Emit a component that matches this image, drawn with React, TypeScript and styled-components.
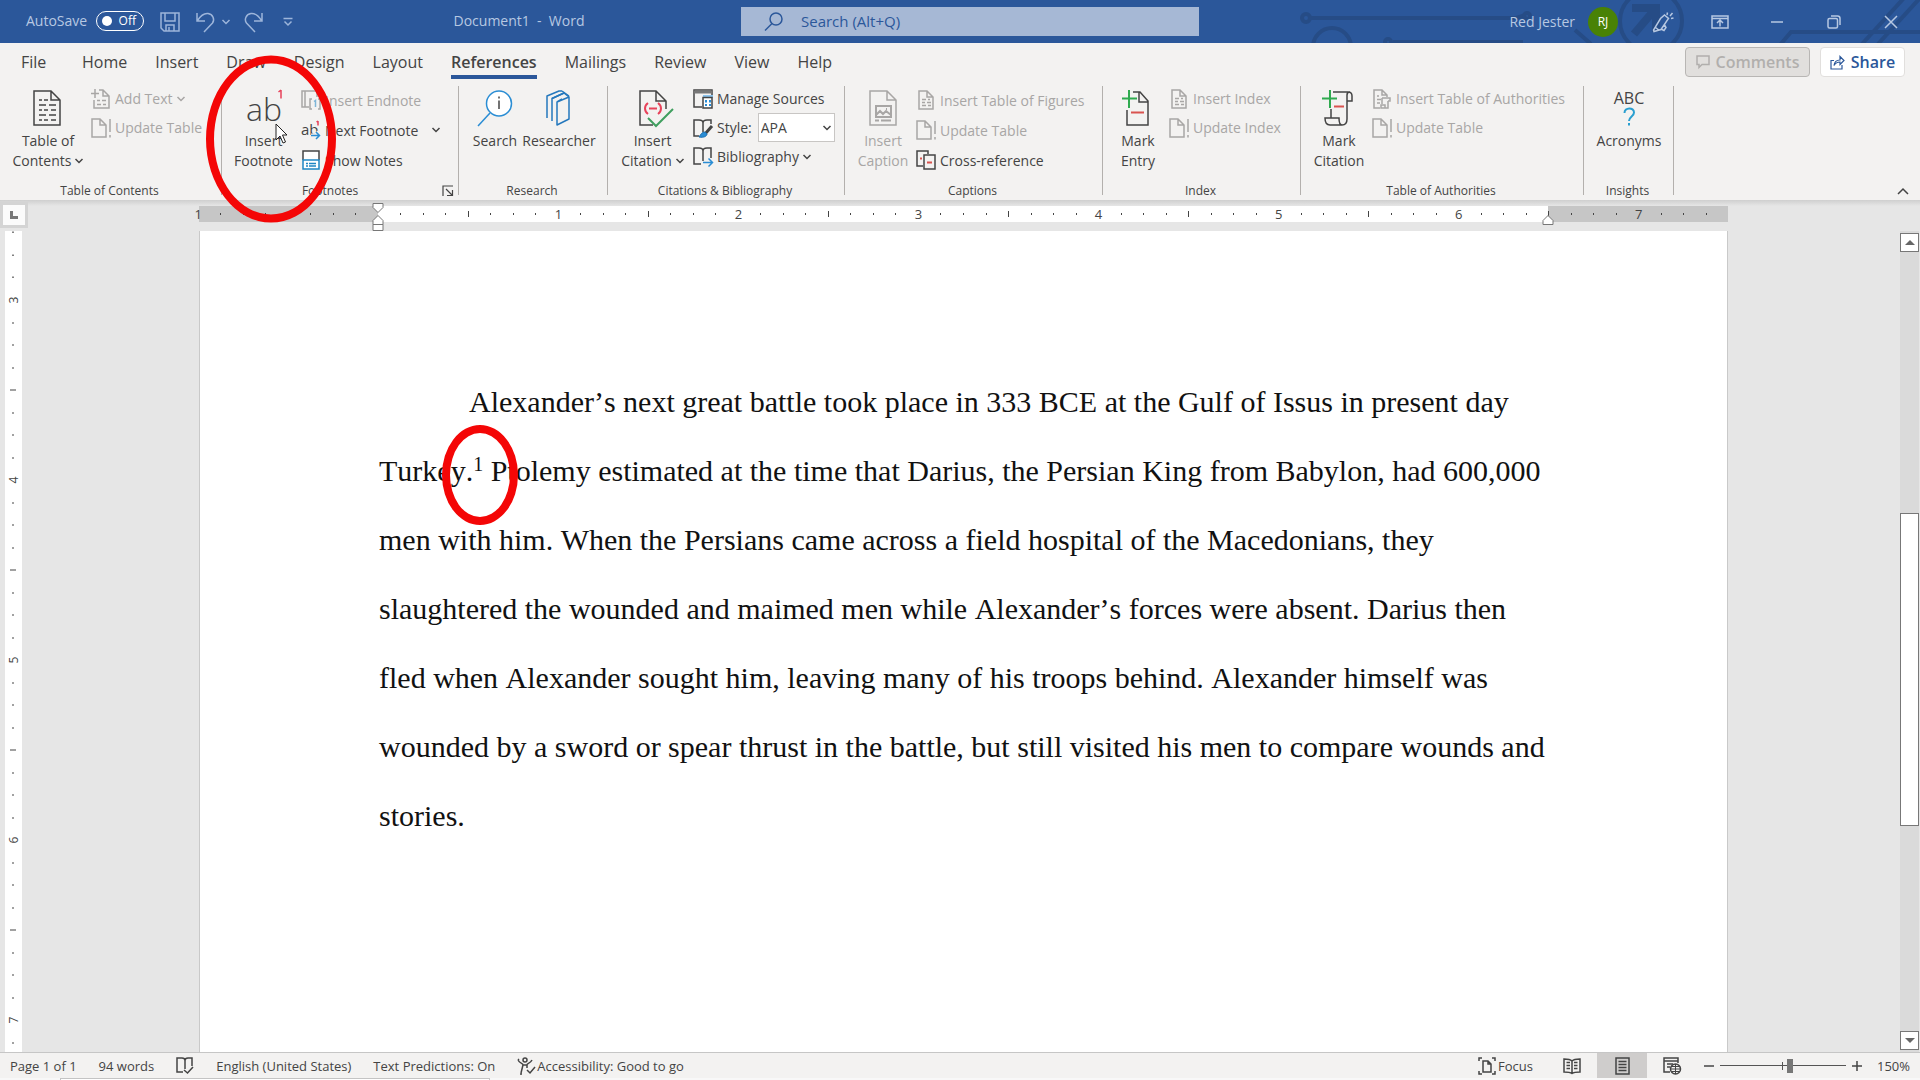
import React from 'react';
import styled, { createGlobalStyle, css } from 'styled-components';

const blue = '#2b579a';
const ink = '#444444';
const dim = '#a8a6a5';

const GlobalStyle = createGlobalStyle`
  *, *::before, *::after { box-sizing: border-box; }
  body {
    margin: 0;
    background: #e6e6e6;
    color: ${ink};
    font-family: "Open Sans", "Noto Sans", sans-serif;
    font-size: 14px;
  }
  button, input, select { font: inherit; color: inherit; }
  button { padding: 0; border: 0; background: none; cursor: pointer; }
  button:disabled { cursor: default; }
`;

const Window = styled.div`
  display: flex;
  flex-direction: column;
  height: 100vh;
  min-height: 600px;
  overflow: hidden;
`;

/* ---------- icons ---------- */

const Svg = styled.svg<{ $sw: number }>`
  display: block;
  flex: none;
  fill: none;
  stroke: currentColor;
  stroke-width: ${p => p.$sw};
  overflow: visible;
`;

type IconProps = { w?: number; h?: number; children: React.ReactNode; sw?: number };
const Icon = ({ w = 20, h = 20, sw = 1.5, children }: IconProps) => (
  <Svg width={w} height={h} viewBox={`0 0 ${w} ${h}`} $sw={sw} aria-hidden="true">
    {children}
  </Svg>
);

const Chevron = () => (
  <Icon w={8} h={6}><path d="M0.5 1l3.5 3.5L7.5 1" /></Icon>
);

const SaveIcon = () => (
  <Icon><path d="M1 1h18v18H4l-3-3zM5 1v8h10V1M6 19v-6h8v6M9 15v4" /></Icon>
);
const UndoIcon = () => (
  <Icon><path d="M1 1v8h8M1.500 8.500C5 3 8 1 12 1.500c5 .8 7 6 4.500 9.500L8 20" /></Icon>
);
const RedoIcon = () => (
  <Icon><path d="M18 1v8h-8M17.500 8.500C14 3 11 1 7 1.500 2 2.300 0 7.500 2.500 11l8.500 9" /></Icon>
);
const CustomizeIcon = () => (
  <Icon w={10} h={10}><path d="M0.500 1.500h9M1.500 4.500l3.500 3.500 3.500-3.500" /></Icon>
);
const LensIcon = () => (
  <Icon w={19} h={19}><circle cx="12" cy="7" r="6" /><path d="M8 11.500L1 18.500" /></Icon>
);
const PenIcon = () => (
  <Icon w={22} h={20}>
    <path d="M12.500 3l4 3.500L9 17.500 2 19.500 1.500 18 8.500 6.500zM3.500 15.500l4 3M9 17l3 1.500 2-3-1.500-2.500M15 3l.5-2.500M18 4l2.500-3M19 6.500l2.500-.5" />
  </Icon>
);
const DisplayIcon = () => (
  <Icon w={18} h={14}><path d="M1 1h16v12H1zM1 3.500h16M9 11.500V5.500M6 8l3-3 3 3" /></Icon>
);
const MinimizeIcon = () => <Icon w={14} h={14}><path d="M1 7h12" /></Icon>;
const RestoreIcon = () => (
  <Icon w={14} h={14}><rect x="1" y="3.500" width="9.500" height="9.500" rx="1.500" /><path d="M4 1h6.500Q13 1 13 3.500V10" /></Icon>
);
const CloseIcon = () => <Icon w={14} h={14}><path d="M1 1l12 12M13 1L1 13" /></Icon>;
const CommentIcon = () => <Icon w={14} h={14}><path d="M1 1h12v8.500H6L3 12.500V9.500H1z" /></Icon>;
const ShareIcon = () => (
  <Icon w={15} h={15} sw={1.2}><path d="M4 5.500H1V14h11v-4M4 10.500c.5-4 2.500-5.500 6-5.500V1.500L14 5.500 10 9.500V7c-3 0-4.500 1-6 3.500z" /></Icon>
);

const ContentsIcon = () => (
  <Icon w={36} h={36}>
    <path d="M4 2h17l9 9v25H4zM21 2v9h9" />
    <path d="M9 11h3M14 11h4M9 16h7M19 16h7M9 21h3M14 21h4M21 21h5M9 26h7M19 26h7M9 31h3M14 31h4M21 31h5" />
  </Icon>
);
const AddTextIcon = () => (
  <Icon>
    <path d="M8 1h4l6 6v12H3v-8M12 1v6h6M0 4.500h8M4 0v9" />
    <path d="M6 11.500h3M11 11.500h4M6 15.500h4M12 15.500h3" />
  </Icon>
);
const DocBangIcon = () => (
  <Icon><path d="M1 1h8l6 6v12H1zM9 1v6h6M19 1v13M19 17v2.500" /></Icon>
);
const DocLinesIcon = () => (
  <Icon>
    <path d="M3 1h8l6 6v12H3zM11 1v6h6" />
    <path d="M6 9.500h4M12 9.500h2M6 12.500h3M11 12.500h4M6 15.500h4M12 15.500h3" />
  </Icon>
);
const AuthorityTableIcon = () => (
  <Icon>
    <path d="M8 19H2V1h8l5 5v2M10 1v5h5M5 7h2M5 10.500h4M5 14h3" />
    <path d="M10 9h8v3h-2M10 9v6M16 12v7H9v-3h4v3" />
  </Icon>
);
const EndnoteIcon = () => (
  <Icon>
    <path d="M8 17H1V1h15v6M4 1v16" />
    <path d="M11 9H9v10h2M17 9h2v10h-2" />
    <path d="M13 11.500l1.500-1V17" stroke="#7fb6d8" />
  </Icon>
);
const GlyphText = styled.text`
  fill: currentColor;
  stroke: none;
  font-family: "Open Sans", "Noto Sans", sans-serif;
`;
const NextNoteIcon = () => (
  <Icon>
    <GlyphText x="0" y="15" fontSize="15">ab</GlyphText>
    <path d="M17 1v4.500M15.500 2l1.500-1" stroke="#e8425a" />
    <path d="M10 15.500h8M15 12l3.500 3.500L15 19" stroke="#f3f2f1" strokeWidth="4" />
    <path d="M10 15.500h8M15 12l3.500 3.500L15 19" stroke="#2a8dd4" />
  </Icon>
);
const ShowNotesIcon = () => (
  <Icon>
    <path d="M2 10V1h16v9" fill="#fff" />
    <path d="M2 10h16v9H2z" stroke="#1f86c4" fill="#fff" />
    <path d="M5 13.500h2M8 13.500h7M5 16h2M8 16h7" stroke="#1f86c4" />
  </Icon>
);
const InsertFootnoteIcon = () => (
  <Icon w={40} h={40}>
    <GlyphText x="2" y="32" fontSize="32" fontWeight="300">ab</GlyphText>
    <path d="M37 1v8.500M34.500 3L37 1" stroke="#e8425a" />
  </Icon>
);
const SearchIcon = () => (
  <Icon w={36} h={38}>
    <circle cx="22" cy="14.500" r="12.500" stroke="#2a8dd4" fill="#fff" />
    <path d="M13 24L1 37" stroke="#2a8dd4" />
    <path d="M22 11.500V20M22 7.500v2" />
  </Icon>
);
const ResearcherIcon = () => (
  <Icon w={36} h={36}>
    <g stroke="#2578bd" strokeLinejoin="round" transform="translate(1 1)">
      <path d="M15 12l12-5v22l-12 6zM15 12l5-3M20 1l7 5M10 31V8.500L22 3M5 28V6l12-5h3" />
      <path d="M10 8.500L22 3l5 4" />
    </g>
  </Icon>
);
const CitationIcon = () => (
  <Icon w={36} h={38}>
    <path d="M18 36H5V2h16l10 10v8M21 2v10h10" />
    <path d="M13 14c-4 3-4 8 0 11M23 14c4 3 4 8 0 11M14 19.500h8" stroke="#e8425a" strokeWidth="2" />
    <path d="M13 29l8 8 17-17" stroke="#3f9f5f" strokeWidth="2" />
  </Icon>
);
const SourcesIcon = () => (
  <Icon>
    <path d="M9 18H1V1h18v6" />
    <path d="M1 3h18" strokeWidth="3" stroke="#777" />
    <path d="M10 6h10v3H10z" fill="#8cc4ee" stroke="none" />
    <path d="M10 8.500h9v10.500h-9z" fill="#fff" />
    <path d="M12 11h2v2.500h-2zM16 11h2v2.500h-2zM12 15h2v2h-2zM16 15h2v2h-2z" fill="#2a8dd4" stroke="none" />
  </Icon>
);
const StyleIcon = () => (
  <Icon>
    <path d="M6 18H1V2h5q4 0 4 3v9M10 5q0-3 4-3h4v4" />
    <path d="M19 8l-7 8" strokeWidth="3" />
    <path d="M12 14c-3 0-4 2-6 5 5 1 8-1 8-3z" fill="#2a8dd4" stroke="#1d6fb0" strokeWidth="1" />
  </Icon>
);
const BibliographyIcon = () => (
  <Icon>
    <path d="M8 17H1V1h5q4 0 4 3v10M10 4q0-3 4-3h4v10" />
    <path d="M10 15.500h9M15.500 11.500l4 4-4 4" stroke="#2a8dd4" />
  </Icon>
);
const CaptionIcon = () => (
  <Icon w={36} h={36}>
    <path d="M5 2h17l9 9v25H5zM22 2v9h9" />
    <path d="M11 17h15v11H11zM11 26l4-4 3 3 3-3 5 4M21 20h1M10 31.500h4M16 31.500h10" strokeWidth="2" />
  </Icon>
);
const CrossRefIcon = () => (
  <Icon>
    <path d="M7 16H1V1h11v3M8 5h11v14H8z" />
    <path d="M4 8.500h2M11 12.500h5" stroke="#d9534f" strokeWidth="2" />
  </Icon>
);
const MarkEntryIcon = () => (
  <Icon w={36} h={38}>
    <path d="M7 21v15h21V12l-8-9h-7M19 3v10h9" />
    <path d="M11 23.500h13" stroke="#d9534f" strokeWidth="2" />
    <path d="M2 9.500h15M9 1v18" stroke="#2faa4f" strokeWidth="2" />
  </Icon>
);
const MarkCitationIcon = () => (
  <Icon w={36} h={38}>
    <path d="M10 20v9M12 3h15q4 0 4 4v5h-5V6q0-3 3-3M26 12v18q0 6-5 6H9q-5 0-5-7h14q0 7 3 7" />
    <path d="M13 17.500h10" stroke="#d9534f" strokeWidth="2" />
    <path d="M1 9.500h15M9 1v18" stroke="#2faa4f" strokeWidth="2" />
  </Icon>
);
const AcronymsIcon = () => (
  <Icon w={40} h={38}>
    <GlyphText x="20" y="15" fontSize="16" textAnchor="middle">ABC</GlyphText>
    <path d="M15.500 24c0-6 9.500-6 9.500-.500 0 4-5 4-5 8.500M20 34v2.500" stroke="#2a9fd0" strokeWidth="2" />
  </Icon>
);
const LauncherIcon = () => (
  <Icon w={12} h={12} sw={1.2}><path d="M1 11V1h10M4 4l6 6M10.500 5v5.500H5" /></Icon>
);
const ProofIcon = () => (
  <Icon w={18} h={17}><path d="M7 15H1V1h5q3 0 3 2.500V12M9 3.500Q9 1 12 1h4v8M8 13l3.500 3L17 10" /></Icon>
);
const AccessIcon = () => (
  <Icon w={18} h={18}>
    <circle cx="8" cy="3" r="2" />
    <path d="M1 3c2 4 5 3 5 5l-2 8M15 3c-2 4-5 3-5 5v3M6 8h4M1 3l1-1M3 17h2M10 13l3 3 5-6" />
  </Icon>
);
const FocusIcon = () => (
  <Icon w={18} h={18}>
    <path d="M1 4V1h3M14 1h3v3M17 14v3h-3M4 17H1v-3M5 4h5l3 3v8H5zM10 4v3h3" />
  </Icon>
);
const ReadIcon = () => (
  <Icon w={18} h={16}>
    <path d="M9 3Q7 1 1 1v13q6 0 8 1.500Q11 14 17 14V1Q11 1 9 3zM9 3v12M3.500 4.500H7M3.500 7.500H7M3.500 10.500H7M11 4.500h3.500M11 7.500h3.500M11 10.500h3.500" />
  </Icon>
);
const PrintIcon = () => (
  <Icon w={15} h={18}><path d="M1 1h13v16H1zM3.500 4.500h8M3.500 7.500h8M3.500 10.500h8M3.500 13.500h8" /></Icon>
);
const WebIcon = () => (
  <Icon w={18} h={18}>
    <path d="M7 15H1V1h14v5M1 4h14M4 7h6M4 10h3" />
    <circle cx="12.500" cy="12" r="5" />
    <path d="M7.500 12h10M12.500 7v10M9 9.500h7M9 14.500h7" strokeWidth="1" />
  </Icon>
);

/* ---------- title bar ---------- */

const TitleBar = styled.header`
  position: relative;
  display: grid;
  grid-template-columns: minmax(0, 741fr) minmax(0, 458fr) minmax(0, 721fr);
  align-items: center;
  flex: none;
  height: 43px;
  background: ${blue};
  color: #b7c8e2;
`;
const Circuit = styled.svg`
  position: absolute;
  top: 0;
  right: 0;
  fill: none;
  stroke: #264c86;
  stroke-width: 4;
`;
const TitleLeft = styled.div`
  display: flex;
  align-items: center;
  padding: 0 0 2px 26px;
`;
const AutoSave = styled.label`
  display: flex;
  align-items: center;
  gap: 8px;
  width: 118px;
  white-space: nowrap;
`;
const Toggle = styled.span`
  display: flex;
  align-items: center;
  justify-content: space-between;
  flex: none;
  width: 48px;
  height: 20px;
  padding: 0 7px 0 5px;
  border: 1px solid #fff;
  border-radius: 10px;
  color: #fff;
  font-size: 12px;
  margin-left: auto;
`;
const ToggleInput = styled.input`
  appearance: none;
  width: 10px;
  height: 10px;
  margin: 0;
  border-radius: 50%;
  background: #fff;
`;
const QuickButtons = styled.div`
  display: flex;
  align-items: center;
  margin-left: 16px;
  padding-top: 3px;
  color: #9db5da;
`;
const QuickButton = styled.button<{ $gap: number }>`
  display: flex;
  margin-right: ${p => p.$gap}px;
`;
const DocTitle = styled.h1`
  flex: 1;
  margin: 0;
  padding-left: 4px;
  text-align: center;
  font-size: 14px;
  font-weight: 400;
  white-space: pre;
`;
const SearchBox = styled.label`
  display: flex;
  align-items: center;
  gap: 18px;
  height: 29px;
  padding: 0 23px;
  background: #a6b8d5;
  color: ${blue};
`;
const SearchInput = styled.input`
  flex: 1;
  min-width: 0;
  padding: 0 0 1px;
  border: 0;
  outline: 0;
  background: none;
  font-size: 15px;
  &::placeholder { color: ${blue}; opacity: 1; }
`;
const TitleRight = styled.div`
  position: relative;
  display: flex;
  align-items: center;
  justify-content: flex-end;
  height: 100%;
  padding-right: 1px;
`;
const UserName = styled.span`
  margin-right: 13px;
`;
const Avatar = styled.span`
  display: grid;
  place-items: center;
  width: 30px;
  height: 30px;
  margin-right: 16px;
  border-radius: 50%;
  background: #498205;
  color: #fff;
  font-size: 12px;
`;
const CaptionButton = styled.button`
  display: grid;
  place-items: center;
  width: 57px;
  height: 100%;
`;

/* ---------- tabs ---------- */

const TabRow = styled.nav`
  display: flex;
  align-items: flex-start;
  flex: none;
  height: 37px;
  padding: 4px 15px 0 21px;
  background: #f3f2f1;
`;
const TabList = styled.div`
  display: flex;
  flex: 1;
  gap: 28px;
`;
const Tab = styled.button<{ $active?: boolean }>`
  min-width: 33px;
  height: 32px;
  padding-top: 1px;
  border-bottom: 4px solid ${p => (p.$active ? blue : 'transparent')};
  font-size: 16px;
  font-weight: ${p => (p.$active ? 600 : 400)};
  text-align: left;
`;
const PillButton = styled.button<{ $primary?: boolean }>`
  display: flex;
  align-items: center;
  justify-content: center;
  gap: 6px;
  height: 30px;
  width: ${p => (p.$primary ? 85 : 125)}px;
  margin-left: 10px;
  border: 1px solid ${p => (p.$primary ? '#e1dfdd' : '#b8b6b4')};
  border-radius: 4px;
  background: ${p => (p.$primary ? '#fff' : '#e1dfdd')};
  color: ${p => (p.$primary ? blue : '#b1afad')};
  font-size: 16px;
  font-weight: 600;
`;

/* ---------- ribbon ---------- */

const Ribbon = styled.div`
  display: flex;
  flex: none;
  height: 120px;
  background: #f3f2f1;
`;
const Group = styled.section<{ $width: number; $indent: number }>`
  position: relative;
  display: flex;
  flex-direction: column;
  flex: none;
  width: ${p => p.$width}px;
  padding-left: ${p => p.$indent}px;
  &::after {
    content: "";
    position: absolute;
    top: 6px;
    right: 0;
    bottom: 5px;
    width: 1px;
    background: #b3b0ad;
  }
`;
const Commands = styled.div`
  display: flex;
  flex: 1;
`;
const GroupFooter = styled.div<{ $indent: number }>`
  display: flex;
  align-items: center;
  margin-left: -${p => p.$indent}px;
  padding-right: 3px;
`;
const GroupLabel = styled.h2`
  flex: 1;
  margin: 0;
  text-align: center;
  font-size: 12px;
  font-weight: 400;
  line-height: 18px;
`;
const Launcher = styled.button`
  padding: 0 2px 0 4px;
`;
const BigButton = styled.button<{ $width: number }>`
  position: relative;
  display: flex;
  flex-direction: column;
  align-items: center;
  align-self: flex-start;
  flex: none;
  width: ${p => p.$width}px;
  padding-top: 9px;
  line-height: 20px;
  white-space: nowrap;
  &:disabled { color: ${dim}; }
`;
const BigIcon = styled.span`
  display: flex;
  height: 42px;
`;
const Line = styled.span`
  display: flex;
  align-items: center;
  gap: 4px;
`;
const SmallList = styled.div<{ $tall?: boolean }>`
  display: flex;
  flex-direction: column;
  padding-top: ${p => (p.$tall ? 5 : 4)}px;
  ${p => css`& > * { height: ${p.$tall ? 30 : 29}px; }`}
`;
const SmallButton = styled.button`
  display: flex;
  align-items: center;
  gap: 4px;
  white-space: nowrap;
  &:disabled { color: ${dim}; }
`;
const StyleRow = styled.label`
  display: flex;
  align-items: center;
  gap: 4px;
`;
const SelectWrap = styled.span`
  position: relative;
  display: flex;
  align-items: center;
  margin-left: 2px;
  & > svg { position: absolute; right: 4px; pointer-events: none; }
`;
const StyleSelect = styled.select`
  appearance: none;
  width: 77px;
  height: 29px;
  padding: 0 2px;
  border: 1px solid #c8c6c4;
  border-radius: 0;
  background: #fff;
`;
const MoreArrow = styled.span`
  display: flex;
  margin-left: 10px;
`;
const CollapseButton = styled.button`
  align-self: flex-end;
  margin: 0 11px 5px auto;
`;

/* ---------- annotations ---------- */

const Ring = styled.span<{ $w: number; $h: number }>`
  position: absolute;
  z-index: 5;
  left: 50%;
  top: 50%;
  width: ${p => p.$w}px;
  height: ${p => p.$h}px;
  margin: 11px 0 0 2px;
  border: 8px solid #f40606;
  border-radius: 50%;
  transform: translate(-50%, -50%);
  pointer-events: none;
`;
const ButtonRing = styled(Ring)`
  margin: 13px 0 0 7px;
`;
const Pointer = styled.svg`
  position: absolute;
  z-index: 4;
  left: 49px;
  top: 43px;
`;

/* ---------- workspace ---------- */

const Workspace = styled.main`
  display: grid;
  grid-template-columns: 27px minmax(0, 1fr) 20px;
  grid-template-rows: 31px minmax(0, 1fr);
  flex: 1;
  min-height: 0;
  background: linear-gradient(#cfcfcf, #e6e6e6 6px);
`;
const TabStop = styled.button`
  display: grid;
  place-items: center;
  width: 28px;
  height: 26px;
  margin-top: 2px;
  border: 3px solid #d4d4d4;
  background: #fbfbfb;
`;
const RulerLane = styled.div`
  display: flex;
  justify-content: center;
  padding-top: 6px;
`;
const Ruler = styled.div`
  position: relative;
  flex: none;
  width: 1529px;
  height: 16px;
  background: linear-gradient(90deg, #c6c6c6 179px, #fff 179px, #fff 1349px, #c6c6c6 1349px);
`;
const Ticks = styled.div`
  display: grid;
  grid-template-columns: repeat(69, minmax(0, 1fr));
  margin: 0 -12px;
  height: 16px;
  font-size: 13px;
  line-height: 16px;
`;
const Tick = styled.span<{ $kind: 'dot' | 'line' | 'number' | 'none' }>`
  display: grid;
  place-items: center;
  &::before {
    content: ${p => (p.$kind === 'dot' || p.$kind === 'line' ? '""' : 'none')};
    width: 1px;
    height: ${p => (p.$kind === 'line' ? 6 : 2)}px;
    background: ${ink};
  }
`;
const Marker = styled.svg<{ $x: number; $top: number }>`
  position: absolute;
  left: ${p => p.$x}px;
  top: ${p => p.$top}px;
  fill: #fff;
  stroke: #777;
`;
const SideRuler = styled.div`
  width: 17px;
  margin-left: 5px;
  overflow: hidden;
  background: #fff;
  font-size: 12px;
`;
const SideInch = styled.div<{ $count: number; $height: number; $lift?: boolean }>`
  display: grid;
  grid-template-rows: repeat(${p => p.$count}, minmax(0, 1fr));
  height: ${p => p.$height}px;
  margin-top: ${p => (p.$lift ? -10 : 0)}px;
`;
const SideTick = styled.span<{ $kind: 'dot' | 'line' | 'number' }>`
  display: grid;
  place-items: center;
  writing-mode: vertical-rl;
  transform: rotate(180deg);
  line-height: 15px;
  &::before {
    content: ${p => (p.$kind === 'number' ? 'none' : '""')};
    height: 1px;
    width: ${p => (p.$kind === 'line' ? 6 : 2)}px;
    background: ${ink};
  }
`;
const PageLane = styled.div`
  display: flex;
  justify-content: center;
  overflow: hidden;
`;
const Page = styled.article`
  flex: none;
  width: 1529px;
  padding: 136px 178px 0 179px;
  border: solid #c9c9c9;
  border-width: 0 1px;
  background: #fff;
  color: #111;
  font-family: "Liberation Serif", "Times New Roman", serif;
  font-size: 30px;
  font-kerning: none;
  line-height: 69px;
`;
const Paragraph = styled.p`
  margin: 0;
  text-indent: 90px;
`;
const NoteRef = styled.sup`
  position: relative;
  display: inline-block;
  font-size: 20px;
  line-height: 20px;
  vertical-align: 10px;
  text-indent: 0;
`;

const ScrollBar = styled.div`
  display: flex;
  flex-direction: column;
  width: 19px;
  padding: 2px 0;
  background: #dadada;
`;
const ScrollButton = styled.button`
  display: grid;
  place-items: center;
  flex: none;
  width: 19px;
  height: 19px;
  border: 1px solid #777;
  background: #fff;
`;
const ScrollSpace = styled.div<{ $grow: number }>`
  flex: ${p => p.$grow} 0 0;
`;
const ScrollThumb = styled.div`
  flex: 312 0 0;
  border: 1px solid #777;
  background: #fff;
`;

/* ---------- status bar ---------- */

const StatusBar = styled.footer`
  display: flex;
  align-items: center;
  justify-content: space-between;
  flex: none;
  height: 26px;
  padding: 0 10px;
  border-top: 1px solid #c6c6c6;
  background: #f3f2f1;
  font-size: 13px;
  white-space: nowrap;
`;
const StatusSide = styled.div<{ $gap: number }>`
  display: flex;
  align-items: center;
  gap: ${p => p.$gap}px;
  height: 100%;
`;
const StatusButton = styled.button`
  display: flex;
  align-items: center;
  gap: 2px;
`;
const FocusButton = styled(StatusButton)`
  margin-right: 14px;
`;
const ViewButton = styled.button<{ $active?: boolean }>`
  display: grid;
  place-items: center;
  width: 50px;
  height: 100%;
  background: ${p => (p.$active ? '#cfcdcc' : 'transparent')};
`;
const Zoom = styled.div`
  display: flex;
  align-items: center;
  gap: 6px;
  margin-left: 7px;
`;
const ZoomRange = styled.input`
  appearance: none;
  width: 126px;
  height: 16px;
  margin: 0;
  background:
    linear-gradient(#555, #555) 62px 50% / 1px 8px no-repeat,
    linear-gradient(#555, #555) 0 50% / 100% 1px no-repeat;
  &::-webkit-slider-thumb {
    appearance: none;
    width: 6px;
    height: 14px;
    background: #777;
  }
`;
const ZoomValue = styled.span`
  width: 48px;
  text-align: right;
`;
const DesktopEdge = styled.div`
  flex: none;
  height: 2px;
  padding-left: 60px;
  background: #f8f8f8;
`;
const DesktopPanel = styled.div`
  width: 430px;
  height: 2px;
  border: 1px solid #c4c4c4;
  border-bottom: 0;
  background: #fff;
`;

const tabs = ['File', 'Home', 'Insert', 'Draw', 'Design', 'Layout', 'References', 'Mailings', 'Review', 'View', 'Help'];

type GroupProps = { label: string; width: number; indent?: number; launcher?: boolean; children: React.ReactNode };
const RibbonGroup = ({ label, width, indent = 0, launcher, children }: GroupProps) => (
  <Group $width={width} $indent={indent} aria-label={label}>
    <Commands>{children}</Commands>
    <GroupFooter $indent={indent}>
      <GroupLabel>{label}</GroupLabel>
      {launcher ? <Launcher aria-label={`${label} settings`}><LauncherIcon /></Launcher> : null}
    </GroupFooter>
  </Group>
);

type BigProps = {
  icon: React.ReactNode; lines: string[]; width: number;
  menu?: boolean; disabled?: boolean; children?: React.ReactNode;
};
const Big = ({ icon, lines, width, menu, disabled, children }: BigProps) => (
  <BigButton $width={width} disabled={disabled}>
    <BigIcon>{icon}</BigIcon>
    {lines.map((text, i) => (
      <Line key={text}>{text}{menu && i === lines.length - 1 ? <Chevron /> : null}</Line>
    ))}
    {children}
  </BigButton>
);

type SmallProps = { icon: React.ReactNode; label: string; menu?: boolean; disabled?: boolean; more?: boolean };
const Small = ({ icon, label, menu, disabled, more }: SmallProps) => (
  <SmallButton disabled={disabled}>
    {icon}{label}
    {menu ? <Chevron /> : null}
    {more ? <MoreArrow><Chevron /></MoreArrow> : null}
  </SmallButton>
);

const rulerTick = (i: number): { kind: 'dot' | 'line' | 'number' | 'none'; text?: string } => {
  if (i === 8 || i === 68) return { kind: 'none' };
  if (i % 8 === 0) return { kind: 'number', text: String(Math.abs(i / 8 - 1)) };
  return { kind: i % 8 === 4 ? 'line' : 'dot' };
};

export default function App() {
  return (
    <Window>
      <GlobalStyle />
      <TitleBar>
        <Circuit width="640" height="43" viewBox="1280 0 640 43" aria-hidden="true">
          <circle cx="1306" cy="18" r="4" />
          <path d="M1311 18h205M1393 42h130M1516 18l10-3M1575 30l16 14" />
          <circle cx="1527" cy="16" r="3" />
          <circle cx="1332" cy="47" r="19" />
          <circle cx="1388" cy="42" r="3" />
          <circle cx="1651" cy="21" r="31" />
          <path d="M1632 8h24v24M1656 8l-22 26" strokeWidth="8" />
          <path d="M1780 45l11-13h129M1862 44l42-46M1878 44l42-46" />
        </Circuit>
        <TitleLeft>
          <AutoSave>
            AutoSave
            <Toggle><ToggleInput type="checkbox" />Off</Toggle>
          </AutoSave>
          <QuickButtons>
            <QuickButton $gap={16} aria-label="Save"><SaveIcon /></QuickButton>
            <QuickButton $gap={6} aria-label="Undo"><UndoIcon /></QuickButton>
            <QuickButton $gap={14} aria-label="Undo history"><Chevron /></QuickButton>
            <QuickButton $gap={19} aria-label="Redo"><RedoIcon /></QuickButton>
            <QuickButton $gap={0} aria-label="Customize toolbar"><CustomizeIcon /></QuickButton>
          </QuickButtons>
          <DocTitle>{'Document1  -  Word'}</DocTitle>
        </TitleLeft>
        <SearchBox>
          <LensIcon />
          <SearchInput type="search" placeholder="Search (Alt+Q)" aria-label="Search" />
        </SearchBox>
        <TitleRight>
          <UserName>Red Jester</UserName>
          <Avatar>RJ</Avatar>
          <CaptionButton aria-label="Ink"><PenIcon /></CaptionButton>
          <CaptionButton aria-label="Ribbon display options"><DisplayIcon /></CaptionButton>
          <CaptionButton aria-label="Minimize"><MinimizeIcon /></CaptionButton>
          <CaptionButton aria-label="Restore"><RestoreIcon /></CaptionButton>
          <CaptionButton aria-label="Close"><CloseIcon /></CaptionButton>
        </TitleRight>
      </TitleBar>

      <TabRow>
        <TabList>
          {tabs.map(name => <Tab key={name} $active={name === 'References'}>{name}</Tab>)}
        </TabList>
        <PillButton disabled><CommentIcon />Comments</PillButton>
        <PillButton $primary><ShareIcon />Share</PillButton>
      </TabRow>

      <Ribbon>
        <RibbonGroup label="Table of Contents" width={222} indent={5}>
          <Big icon={<ContentsIcon />} lines={['Table of', 'Contents']} width={86} menu />
          <SmallList>
            <Small icon={<AddTextIcon />} label="Add Text" menu disabled />
            <Small icon={<DocBangIcon />} label="Update Table" disabled />
          </SmallList>
        </RibbonGroup>

        <RibbonGroup label="Footnotes" width={237} indent={4} launcher>
          <Big icon={<InsertFootnoteIcon />} lines={['Insert', 'Footnote']} width={75}>
            <Pointer width="13" height="21" viewBox="0 0 13 21" aria-hidden="true">
              <path d="M1 1v16l4-4 3 7 2.500-1-3-7H12z" fill="#fff" stroke="#222" />
            </Pointer>
            <ButtonRing $w={130} $h={167} />
          </Big>
          <SmallList $tall>
            <Small icon={<EndnoteIcon />} label="Insert Endnote" disabled />
            <Small icon={<NextNoteIcon />} label="Next Footnote" more />
            <Small icon={<ShowNotesIcon />} label="Show Notes" />
          </SmallList>
        </RibbonGroup>

        <RibbonGroup label="Research" width={149} indent={10}>
          <Big icon={<SearchIcon />} lines={['Search']} width={52} />
          <Big icon={<ResearcherIcon />} lines={['Researcher']} width={76} />
        </RibbonGroup>

        <RibbonGroup label="Citations & Bibliography" width={237} indent={4}>
          <Big icon={<CitationIcon />} lines={['Insert', 'Citation']} width={81} menu />
          <SmallList>
            <Small icon={<SourcesIcon />} label="Manage Sources" />
            <StyleRow>
              <StyleIcon />Style:
              <SelectWrap>
                <StyleSelect defaultValue="APA"><option>APA</option></StyleSelect>
                <Chevron />
              </SelectWrap>
            </StyleRow>
            <Small icon={<BibliographyIcon />} label="Bibliography" menu />
          </SmallList>
        </RibbonGroup>

        <RibbonGroup label="Captions" width={258} indent={5}>
          <Big icon={<CaptionIcon />} lines={['Insert', 'Caption']} width={66} disabled />
          <SmallList $tall>
            <Small icon={<DocLinesIcon />} label="Insert Table of Figures" disabled />
            <Small icon={<DocBangIcon />} label="Update Table" disabled />
            <Small icon={<CrossRefIcon />} label="Cross-reference" />
          </SmallList>
        </RibbonGroup>

        <RibbonGroup label="Index" width={198} indent={4}>
          <Big icon={<MarkEntryIcon />} lines={['Mark', 'Entry']} width={62} />
          <SmallList>
            <Small icon={<DocLinesIcon />} label="Insert Index" disabled />
            <Small icon={<DocBangIcon />} label="Update Index" disabled />
          </SmallList>
        </RibbonGroup>

        <RibbonGroup label="Table of Authorities" width={283} indent={5}>
          <Big icon={<MarkCitationIcon />} lines={['Mark', 'Citation']} width={66} />
          <SmallList>
            <Small icon={<AuthorityTableIcon />} label="Insert Table of Authorities" disabled />
            <Small icon={<DocBangIcon />} label="Update Table" disabled />
          </SmallList>
        </RibbonGroup>

        <RibbonGroup label="Insights" width={90}>
          <Big icon={<AcronymsIcon />} lines={['Acronyms']} width={90} />
        </RibbonGroup>

        <CollapseButton aria-label="Collapse ribbon">
          <Icon w={12} h={8}><path d="M1 7l5-5 5 5" /></Icon>
        </CollapseButton>
      </Ribbon>

      <Workspace>
        <TabStop aria-label="Left tab">
          <Icon w={8} h={8} sw={3}><path d="M1.500 0v6.500H8" stroke="#777" /></Icon>
        </TabStop>
        <RulerLane>
          <Ruler>
            <Ticks>
              {Array.from({ length: 69 }, (_, i) => {
                const { kind, text } = rulerTick(i);
                return <Tick key={i} $kind={kind}>{text}</Tick>;
              })}
            </Ticks>
            <Marker $x={173} $top={-3} width="12" height="28" viewBox="0 0 12 28" aria-hidden="true">
              <path d="M1 .5h10v4L6 9.500 1 4.500zM6 12.500l5 5v4H1v-4zM1 21.500h10v6H1z" />
            </Marker>
            <Marker $x={1343} $top={9} width="12" height="10" viewBox="0 0 12 10" aria-hidden="true">
              <path d="M6 .5l5 5v4H1v-4z" />
            </Marker>
          </Ruler>
        </RulerLane>
        <span />

        <SideRuler>
          <SideInch $count={3} $height={68} $lift>
            {[0, 1, 2].map(i => <SideTick key={i} $kind="dot" />)}
          </SideInch>
          {[3, 4, 5, 6].map(n => (
            <SideInch key={n} $count={8} $height={180}>
              <SideTick $kind="number">{n}</SideTick>
              {[1, 2, 3, 4, 5, 6, 7].map(i => <SideTick key={i} $kind={i === 4 ? 'line' : 'dot'} />)}
            </SideInch>
          ))}
          <SideInch $count={2} $height={45}>
            <SideTick $kind="number">7</SideTick>
            <SideTick $kind="dot" />
          </SideInch>
        </SideRuler>

        <PageLane>
          <Page>
            <Paragraph>
              Alexander’s next great battle took place in 333 BCE at the Gulf of Issus in present day
              Turkey.<NoteRef>1<Ring $w={76} $h={100} /></NoteRef> Ptolemy estimated at the time that
              Darius, the Persian King from Babylon, had 600,000 men with him. When the Persians came
              across a field hospital of the Macedonians, they slaughtered the wounded and maimed men
              while Alexander’s forces were absent. Darius then fled when Alexander sought him, leaving
              many of his troops behind. Alexander himself was wounded by a sword or spear thrust in the
              battle, but still visited his men to compare wounds and stories.
            </Paragraph>
          </Page>
        </PageLane>

        <ScrollBar>
          <ScrollButton aria-label="Scroll up">
            <Icon w={10} h={5}><path d="M0 5l5-5 5 5z" fill="#666" stroke="none" /></Icon>
          </ScrollButton>
          <ScrollSpace $grow={262} />
          <ScrollThumb />
          <ScrollSpace $grow={206} />
          <ScrollButton aria-label="Scroll down">
            <Icon w={10} h={5}><path d="M0 0l5 5 5-5z" fill="#666" stroke="none" /></Icon>
          </ScrollButton>
        </ScrollBar>
      </Workspace>

      <StatusBar>
        <StatusSide $gap={22}>
          <StatusButton>Page 1 of 1</StatusButton>
          <StatusButton>94 words</StatusButton>
          <StatusButton aria-label="Proofing"><ProofIcon /></StatusButton>
          <StatusButton>English (United States)</StatusButton>
          <StatusButton>Text Predictions: On</StatusButton>
          <StatusButton><AccessIcon />Accessibility: Good to go</StatusButton>
        </StatusSide>
        <StatusSide $gap={0}>
          <FocusButton><FocusIcon />Focus</FocusButton>
          <ViewButton aria-label="Read mode"><ReadIcon /></ViewButton>
          <ViewButton $active aria-label="Print layout"><PrintIcon /></ViewButton>
          <ViewButton aria-label="Web layout"><WebIcon /></ViewButton>
          <Zoom>
            <StatusButton aria-label="Zoom out"><Icon w={10} h={10}><path d="M0 5h10" /></Icon></StatusButton>
            <ZoomRange type="range" min={0} max={100} defaultValue={56} aria-label="Zoom" />
            <StatusButton aria-label="Zoom in"><Icon w={10} h={10}><path d="M0 5h10M5 0v10" /></Icon></StatusButton>
          </Zoom>
          <ZoomValue>150%</ZoomValue>
        </StatusSide>
      </StatusBar>
      <DesktopEdge><DesktopPanel /></DesktopEdge>
    </Window>
  );
}
